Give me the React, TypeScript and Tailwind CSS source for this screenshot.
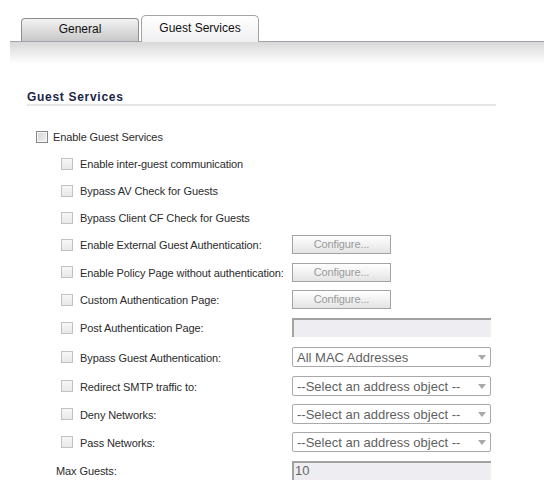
import React from 'react';

type Control =
  | { kind: 'none' }
  | { kind: 'button' }
  | { kind: 'input'; value?: string }
  | { kind: 'select'; value: string };

type Row = {
  label: string;
  main?: boolean;
  noBox?: boolean;
  h: string;
  control: Control;
};

const rows: Row[] = [
  { label: 'Enable Guest Services', main: true, h: 'h-[27px]', control: { kind: 'none' } },
  { label: 'Enable inter-guest communication', h: 'h-[27px]', control: { kind: 'none' } },
  { label: 'Bypass AV Check for Guests', h: 'h-[27px]', control: { kind: 'none' } },
  { label: 'Bypass Client CF Check for Guests', h: 'h-[27px]', control: { kind: 'none' } },
  { label: 'Enable External Guest Authentication:', h: 'h-[27px]', control: { kind: 'button' } },
  { label: 'Enable Policy Page without authentication:', h: 'h-[28px]', control: { kind: 'button' } },
  { label: 'Custom Authentication Page:', h: 'h-[27px]', control: { kind: 'button' } },
  { label: 'Post Authentication Page:', h: 'h-[29px]', control: { kind: 'input' } },
  { label: 'Bypass Guest Authentication:', h: 'h-[30px]', control: { kind: 'select', value: 'All MAC Addresses' } },
  { label: 'Redirect SMTP traffic to:', h: 'h-[28px]', control: { kind: 'select', value: '--Select an address object --' } },
  { label: 'Deny Networks:', h: 'h-[28px]', control: { kind: 'select', value: '--Select an address object --' } },
  { label: 'Pass Networks:', h: 'h-[28px]', control: { kind: 'select', value: '--Select an address object --' } },
  { label: 'Max Guests:', noBox: true, h: 'h-[28px]', control: { kind: 'input', value: '10' } },
];

const CheckBox = ({ main }: { main?: boolean }) =>
  main ? (
    <span className="block w-[12px] h-[12px] border border-[#858585] bg-gradient-to-br from-[#d4d4d4] to-[#f4f4f4] shadow-[inset_0_0_0_1px_#f8f8f8]" />
  ) : (
    <span className="block w-[12px] h-[12px] border border-[#c2c2c2] bg-gradient-to-b from-[#f7f7f7] to-[#e8e8e8]" />
  );

const Arrow = () => (
  <svg width="8" height="5" viewBox="0 0 8 5" className="block">
    <path d="M0 0 H8 L4 5 Z" fill="#a9a9a9" />
  </svg>
);

const ControlView = ({ c }: { c: Control }) => {
  if (c.kind === 'button') {
    return (
      <div className="w-[99px] h-[19px] border border-[#a3a3a3] bg-gradient-to-b from-white to-[#e4e4e4] flex items-center justify-center text-[11px] text-[#9a9a9a] tracking-[-0.1px]">
        Configure...
      </div>
    );
  }
  if (c.kind === 'input') {
    return (
      <div className="w-[199px] h-[19px] bg-[#eeeef2] border-t-2 border-l-2 border-[#a2a2a2] flex items-center pl-[1px] text-[13px] text-[#666]">
        {c.value}
      </div>
    );
  }
  if (c.kind === 'select') {
    return (
      <div className="w-[199px] h-[20px] border border-[#a9a9a9] rounded-[2px] bg-white flex items-center justify-between pl-[4px] pr-[4px] text-[13px] text-[#5f5f5f] leading-none">
        <span>{c.value}</span>
        <Arrow />
      </div>
    );
  }
  return null;
};

export default function App() {
  return (
    <div className="w-[544px] h-[499px] bg-white overflow-hidden font-['Liberation_Sans',Arial,sans-serif] text-[#2b2b2b]">
      {/* tabs */}
      <div className="h-[41px] pt-[15px] pl-[21px] flex items-end">
        <div className="w-[118px] h-[23px] border border-b-0 border-[#8e8e8e] rounded-t-[4px] bg-gradient-to-b from-[#f3f3f3] to-[#c8c8c8] flex items-center justify-center text-[12px] text-[#111] pb-[2px]">
          General
        </div>
        <div className="relative z-10 ml-[2px] w-[118px] h-[27px] -mb-px border border-b-0 border-[#a4a4a4] rounded-t-[5px] bg-gradient-to-b from-white to-[#efeff2] flex items-center justify-center text-[12px] text-[#111] pb-[2px]">
          Guest Services
        </div>
      </div>
      <div className="ml-[10px] h-px bg-[#a3a3ab]" />
      <div className="ml-[10px] h-[22px] bg-gradient-to-b from-[#d8d8d8] to-white" />

      {/* section */}
      <div className="ml-[27px] w-[469px] mt-[26px]">
        <div className="h-[14px] leading-[14px] text-[12px] font-bold text-[#1b2647] tracking-[0.7px]">
          Guest Services
        </div>
        <div className="h-[2px] bg-[#e6e6e6]" />

        <div className="mt-[17px] flex flex-col">
          {rows.map((r) => (
            <div key={r.label} className={`${r.h} flex items-center`}>
              <div className="w-[265px] flex items-center text-[11px] tracking-[-0.1px] text-[#2b2b2b]">
                {r.noBox ? (
                  <span className="ml-[29px] pt-[2px]">{r.label}</span>
                ) : r.main ? (
                  <>
                    <span className="ml-[9px]"><CheckBox main /></span>
                    <span className="ml-[5px] pt-[2px]">{r.label}</span>
                  </>
                ) : (
                  <>
                    <span className="ml-[34px]"><CheckBox /></span>
                    <span className="ml-[7px] pt-[2px] whitespace-nowrap">{r.label}</span>
                  </>
                )}
              </div>
              <ControlView c={r.control} />
            </div>
          ))}
        </div>
      </div>
    </div>
  );
}
